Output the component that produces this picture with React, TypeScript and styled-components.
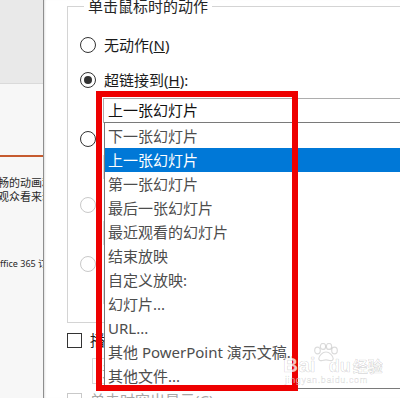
import React from "react";
import styled, { createGlobalStyle } from "styled-components";

const GlobalStyle = createGlobalStyle`
  html, body {
    margin: 0;
    padding: 0;
    background: #fff;
  }
  body {
    font-family: "Noto Sans", "Noto Sans CJK SC", sans-serif;
  }
`;

const Screen = styled.div`
  position: relative;
  display: flex;
  width: 400px;
  height: 398px;
  overflow: hidden;
  font-size: 15px;
  color: #1b1b1b;
`;

/* slide editor behind the dialog */
const SidePane = styled.div`
  flex: 0 0 43px;
  display: flex;
  flex-direction: column;
  background: #f7f7f7;
  overflow: hidden;
`;

const SideHeader = styled.div`
  flex: none;
  height: 83px;
  background: #e9e9e9;
  border-bottom: 1px solid #dadada;
`;

const SideRule = styled.div`
  flex: none;
  margin-top: 71px;
  height: 2px;
  background: #c65b2f;
`;

const SideText = styled.div<{ $top: number; $shift: number; $size?: number }>`
  flex: none;
  margin-top: ${(p) => p.$top}px;
  margin-left: ${(p) => p.$shift}px;
  font-size: ${(p) => p.$size ?? 11}px;
  line-height: 14px;
  white-space: nowrap;
  color: #2a2a2a;
`;

/* the action settings dialog */
const Dialog = styled.div`
  flex: 1;
  display: flex;
  flex-direction: column;
  min-width: 0;
  background: #fff;
  border-left: 1px solid #8e8e8e;
  box-shadow: inset 2px 0 2px -1px rgba(0, 0, 0, 0.12);
  padding-left: 23px;
`;

const GroupBox = styled.fieldset`
  margin: -4px 0 0;
  padding: 0 0 0 12px;
  min-inline-size: 0;
  border: 1px solid #d4d4d4;
  border-right: none;
`;

const Caption = styled.legend`
  margin-left: 4px;
  padding: 0 4px;
  font-size: 15px;
  line-height: 20px;
  color: #262626;
`;

const GroupBody = styled.div`
  display: flex;
  flex-direction: column;
  height: 306px;
`;

const Row = styled.label<{ $mt: number; $muted?: boolean }>`
  display: flex;
  align-items: center;
  gap: 8px;
  height: 24px;
  margin-top: ${(p) => p.$mt}px;
  white-space: nowrap;
  color: ${(p) => (p.$muted ? "#a6a6a6" : "#1b1b1b")};
  line-height: 24px;
`;

const Radio = styled.span<{ $checked?: boolean; $disabled?: boolean }>`
  flex: none;
  display: grid;
  place-items: center;
  width: 16px;
  height: 16px;
  box-sizing: border-box;
  border-radius: 50%;
  border: 1px solid ${(p) => (p.$disabled ? "#c9c9c9" : "#333")};
  background: #fff;

  &::after {
    content: "";
    display: ${(p) => (p.$checked ? "block" : "none")};
    width: 8px;
    height: 8px;
    border-radius: 50%;
    background: #333;
  }
`;

const Check = styled.span<{ $disabled?: boolean }>`
  flex: none;
  width: 15px;
  height: 15px;
  box-sizing: border-box;
  border: 1px solid ${(p) => (p.$disabled ? "#c9c9c9" : "#333")};
  background: #fff;
`;

const LinkCombo = styled.div`
  position: relative;
  z-index: 2;
  margin: 6px 0 0 23px;
  height: 25px;
  box-sizing: border-box;
  border: 1px solid #adadad;
  border-right: none;
  padding-left: 4px;
  line-height: 23px;
  color: #111;
  white-space: nowrap;
  background: #fff;
`;

const DropList = styled.ul`
  position: absolute;
  top: 23px;
  left: 0;
  width: 320px;
  margin: 0;
  padding: 1px 0 0;
  list-style: none;
  background: #fff;
  border: 1px solid #7a7a7a;
  border-right: none;
`;

const Option = styled.li<{ $active?: boolean }>`
  height: 24px;
  padding-left: 3px;
  line-height: 24px;
  white-space: nowrap;
  color: ${(p) => (p.$active ? "#fff" : "#4d4d4d")};
  background: ${(p) => (p.$active ? "#0078d7" : "transparent")};
`;

const Field = styled.div<{ $mt: number; $ml: number; $h: number }>`
  margin: ${(p) => p.$mt}px 0 0 ${(p) => p.$ml}px;
  height: ${(p) => p.$h}px;
  box-sizing: border-box;
  border: 1px solid #d9d9d9;
  border-right: none;
  padding-left: 4px;
  line-height: ${(p) => p.$h - 2}px;
  color: #a6a6a6;
  white-space: nowrap;
`;

/* annotation painted over the screenshot */
const Highlight = styled.div`
  position: absolute;
  z-index: 5;
  left: 96px;
  top: 91px;
  width: 202px;
  height: 300px;
  box-sizing: border-box;
  border: 6px solid #ee0000;
  pointer-events: none;
`;

/* site watermark stamped over everything */
const Watermark = styled.div`
  position: absolute;
  z-index: 6;
  left: 283px;
  top: 343px;
  display: flex;
  flex-direction: column;
  align-items: flex-start;
  color: rgba(255, 255, 255, 0.75);
  -webkit-text-stroke: 0.7px rgba(0, 0, 0, 0.16);
  pointer-events: none;
`;

const Paw = styled.svg`
  margin-left: 30px;
  width: 26px;
  height: 19px;
`;

const MarkTitle = styled.div`
  display: flex;
  align-items: baseline;
  margin-top: -6px;
  height: 18px;
  font-family: "Liberation Sans", "Noto Sans CJK SC", sans-serif;
  font-weight: 700;
  white-space: nowrap;
`;

const MarkPart = styled.span<{ $size: number; $ml?: number }>`
  font-size: ${(p) => p.$size}px;
  line-height: 18px;
  margin-left: ${(p) => p.$ml ?? 0}px;
`;

const MarkUrl = styled.div`
  margin-top: 1px;
  margin-left: 2px;
  font-family: "Liberation Sans", sans-serif;
  font-size: 9px;
  line-height: 11px;
  letter-spacing: 0.6px;
  -webkit-text-stroke: 0.5px rgba(0, 0, 0, 0.14);
`;

const options = [
  "下一张幻灯片",
  "上一张幻灯片",
  "第一张幻灯片",
  "最后一张幻灯片",
  "最近观看的幻灯片",
  "结束放映",
  "自定义放映:",
  "幻灯片...",
  "URL...",
  "其他 PowerPoint 演示文稿...",
  "其他文件...",
];

export default function App() {
  return (
    <>
      <GlobalStyle />
      <Screen>
        <SidePane>
          <SideHeader />
          <SideRule />
          <SideText $top={19} $shift={-13}>流畅的动画和</SideText>
          <SideText $top={0} $shift={-13}>让观众看来动画</SideText>
          <SideText $top={53} $shift={-7} $size={9}>Office 365 订阅</SideText>
        </SidePane>

        <Dialog>
          <GroupBox>
            <Caption>单击鼠标时的动作</Caption>
            <GroupBody>
              <Row $mt={17}>
                <Radio />
                <span>
                  无动作(<u>N</u>)
                </span>
              </Row>
              <Row $mt={11}>
                <Radio $checked />
                <span>
                  超链接到(<u>H</u>):
                </span>
              </Row>
              <LinkCombo>
                上一张幻灯片
                <DropList>
                  {options.map((o, i) => (
                    <Option key={o} $active={i === 1}>
                      {o}
                    </Option>
                  ))}
                </DropList>
              </LinkCombo>
              <Row $mt={4}>
                <Radio />
                <span>
                  运行程序(<u>R</u>):
                </span>
              </Row>
              <Field $mt={4} $ml={23} $h={24} />
              <Row $mt={14} $muted>
                <Radio $disabled />
                <span>
                  运行宏(<u>M</u>):
                </span>
              </Row>
              <Field $mt={4} $ml={23} $h={24} />
              <Row $mt={7} $muted>
                <Radio $disabled />
                <span>
                  对象动作(<u>A</u>):
                </span>
              </Row>
              <Field $mt={4} $ml={23} $h={24} />
            </GroupBody>
          </GroupBox>

          <Row $mt={5}>
            <Check />
            <span>
              播放声音(<u>P</u>):
            </span>
          </Row>
          <Field $mt={6} $ml={25} $h={26}>
            [无声音]
          </Field>
          <Row $mt={4} $muted>
            <Check $disabled />
            <span>
              单击时突出显示(<u>C</u>)
            </span>
          </Row>
        </Dialog>

        <Highlight />

        <Watermark>
          <Paw viewBox="0 0 26 19">
            <g fill="rgba(255,255,255,0.6)" stroke="rgba(0,0,0,0.14)" strokeWidth="1.2">
              <ellipse cx="4.5" cy="7.5" rx="2.8" ry="3.3" />
              <ellipse cx="10" cy="3.4" rx="2.7" ry="3" />
              <ellipse cx="16" cy="3.4" rx="2.7" ry="3" />
              <ellipse cx="21.5" cy="7.5" rx="2.8" ry="3.3" />
              <path d="M13 9c-3.6 0-7.2 4-7.2 6.6 0 1.9 1.7 2.4 3.6 1.9 1.4-.4 2.4-.6 3.6-.6s2.2.2 3.6.6c1.9.5 3.6 0 3.6-1.9C20.2 13 16.6 9 13 9z" />
            </g>
          </Paw>
          <MarkTitle>
            <MarkPart $size={21}>Bai</MarkPart>
            <MarkPart $size={18} $ml={13}>du</MarkPart>
            <MarkPart $size={15} $ml={2}>经验</MarkPart>
          </MarkTitle>
          <MarkUrl>jingyan.baidu.com</MarkUrl>
        </Watermark>
      </Screen>
    </>
  );
}
